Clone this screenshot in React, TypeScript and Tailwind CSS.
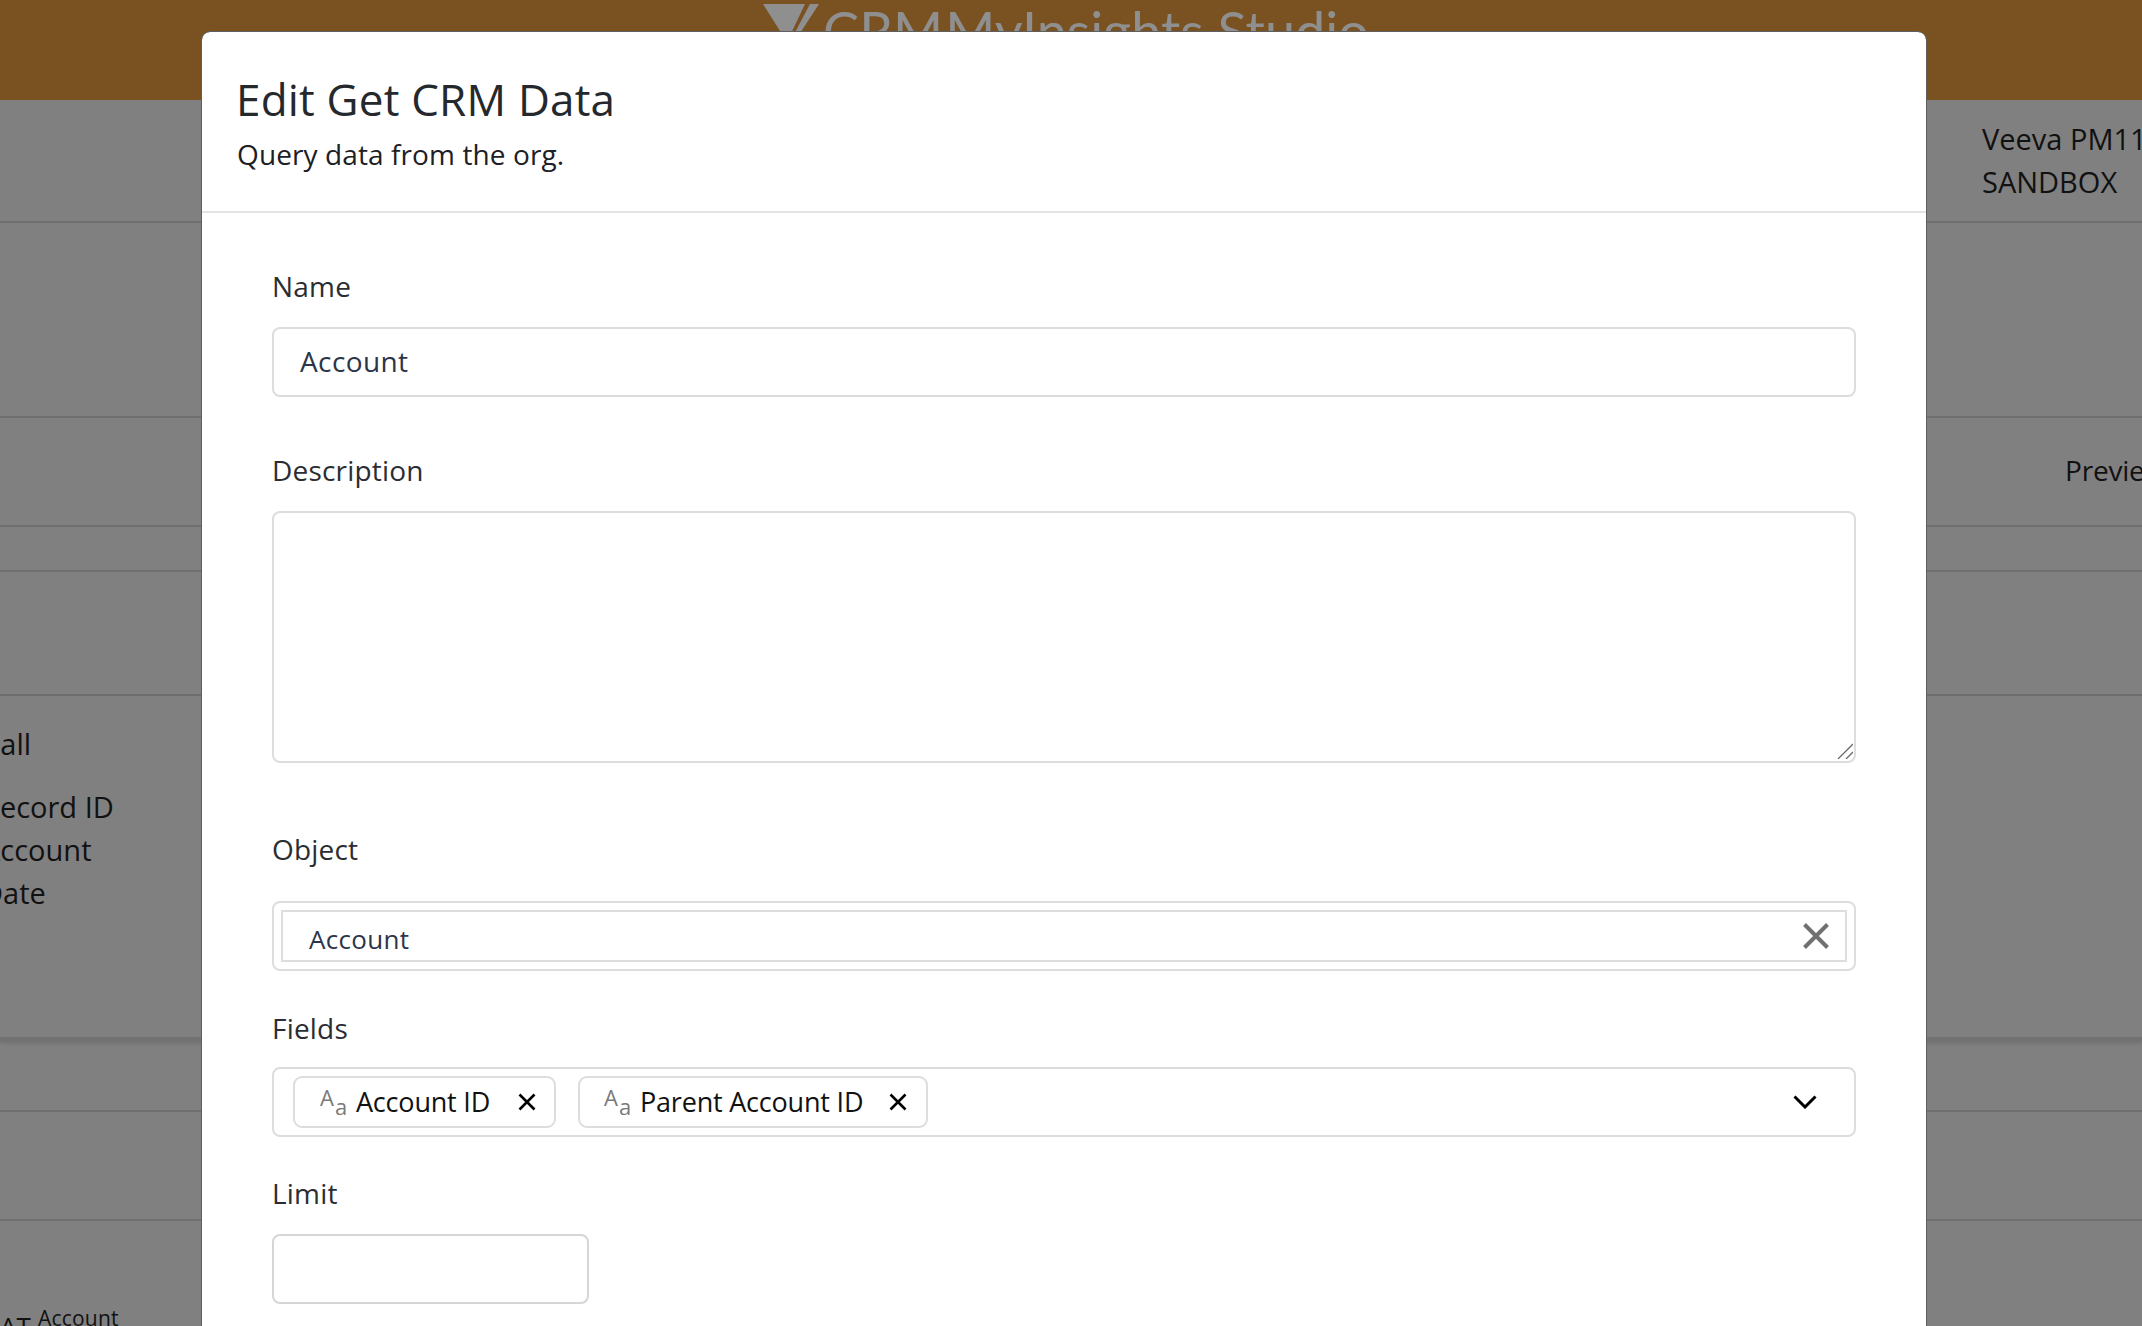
import React from "react";

const font = { fontFamily: '"Open Sans", "Noto Sans", sans-serif' };

function Aa() {
  return (
    <span className="relative inline-block w-[28px] h-[36px] text-[#7a7a7a] font-medium shrink-0">
      <span className="absolute left-0 top-[1px] text-[22px] leading-[24px]">A</span>
      <span className="absolute left-[15px] top-[10px] text-[22px] leading-[24px]">a</span>
    </span>
  );
}

function Chip({ label, className }: { label: string; className: string }) {
  return (
    <div className={`h-[52px] flex items-center border-2 border-[#dddddd] rounded-[9px] bg-white ${className}`}>
      <Aa />
      <span className="ml-[8px] text-[27px] text-[#111111] whitespace-nowrap tracking-[-0.2px]">{label}</span>
      <svg viewBox="0 0 20 20" className="w-[20px] h-[20px] ml-auto" fill="none" stroke="#000000" strokeWidth="2.6">
        <path d="M2.5 2.5 L17.5 17.5 M17.5 2.5 L2.5 17.5" />
      </svg>
    </div>
  );
}

function Label({ children, className }: { children: React.ReactNode; className: string }) {
  return <div className={`h-[40px] leading-[40px] text-[28px] text-[#2b2d31] tracking-[0.2px] ${className}`}>{children}</div>;
}

export default function App() {
  return (
    <div className="relative w-[2142px] h-[1326px] overflow-hidden bg-[#808080] text-[#111111]" style={font}>
      <header className="h-[100px] bg-[#7a5222] flex justify-center">
        <div className="flex items-start gap-[4px] -ml-[10px]">
          <svg viewBox="0 0 56 40" className="w-[56px] h-[40px] mt-[4px]">
            <path d="M0 0 H42 L24 38 Z M47 0 H56 L30 40 L28 36 Z" fill="#8f8f8f" />
          </svg>
          <span className="flex gap-[2px] text-[54px] leading-[62px] text-[#8f8f8f] whitespace-nowrap" style={{ fontFamily: "Lato, sans-serif" }}>
            <span>CRM</span>
            <span>MyInsights Studio</span>
          </span>
        </div>
      </header>

      <section className="h-[123px] border-b-2 border-[#6f6f6f] flex justify-end items-start pt-[17px]">
        <div className="w-[160px] text-[29px] leading-[43px] whitespace-nowrap">
          <div>Veeva PM11</div>
          <div>SANDBOX</div>
        </div>
      </section>
      <section className="h-[195px] border-b-2 border-[#6f6f6f]" />
      <section className="h-[109px] border-b-2 border-[#6f6f6f] flex justify-end items-center">
        <div className="w-[77px] overflow-hidden text-[28px] whitespace-nowrap pb-[4px] tracking-[-0.2px]">Preview</div>
      </section>
      <section className="h-[45px] border-b-2 border-[#6f6f6f]" />
      <section className="h-[124px] border-b-2 border-[#6f6f6f]" />
      <section className="h-[345px] border-b-4 border-[#727272] shadow-[0_2px_4px_rgba(0,0,0,0.15)] pt-[28px]">
        <div className="-ml-[18px] w-[180px] text-[29px]">
          <div className="h-[40px] leading-[40px] mb-[21px]">Call</div>
          <div className="h-[43px] leading-[43px]">Record ID</div>
          <div className="h-[43px] leading-[43px]">Account</div>
          <div className="h-[43px] leading-[43px]">Date</div>
        </div>
      </section>
      <section className="h-[71px] border-b-2 border-[#6f6f6f]" />
      <section className="h-[109px] border-b-2 border-[#6f6f6f]" />
      <section className="flex items-start pt-[85px]">
        <span className="text-[26px] leading-[26px] mt-[7px] w-[38px] overflow-hidden">AT</span>
        <span className="text-[21px] leading-[24px] text-[#111111] tracking-[0.2px]">Account</span>
      </section>

      <div className="absolute left-[202px] top-[32px] w-[1724px] h-[1400px] bg-white rounded-t-[8px] outline outline-1 outline-[#5f5f5f]">
        <div className="h-[181px] border-b-2 border-[#e3e3e3] pl-[34px] pt-[40px]">
          <h1 className="text-[44px] leading-[54px] text-[#25282c] font-normal tracking-[0.2px]">Edit Get CRM Data</h1>
          <p className="text-[28px] leading-[40px] mt-[8px] ml-[1px] text-[#1d2024] tracking-[0.1px]">Query data from the org.</p>
        </div>
        <div className="px-[70px] pt-[53px]">
          <Label className="mb-[21px]">Name</Label>
          <input
            readOnly
            value="Account"
            className="block w-full h-[70px] border-2 border-[#dddddd] rounded-[8px] px-[26px] pb-[3px] text-[28px] text-[#2d3548] outline-none tracking-[0.4px]"
          />
          <Label className="mt-[53px] mb-[21px]">Description</Label>
          <div className="relative">
            <textarea className="block w-full h-[252px] border-2 border-[#dddddd] rounded-[8px] outline-none resize-none" />
            <svg viewBox="0 0 16 16" className="absolute right-[3px] bottom-[4px] w-[16px] h-[16px]" fill="none" stroke="#666666" strokeWidth="1.3">
              <path d="M1 16 L16 1 M9 16 L16 9" />
            </svg>
          </div>
          <Label className="mt-[66px] mb-[32px]">Object</Label>
          <div className="h-[70px] border-2 border-[#dddddd] rounded-[8px] p-[7px]">
            <div className="h-[52px] border-2 border-[#dddddd] flex items-center pl-[26px] pr-[16px]">
              <span className="text-[26px] text-[#2d3548] mt-[6px] tracking-[0.3px]">Account</span>
              <svg viewBox="0 0 26 26" className="w-[26px] h-[26px] ml-auto" fill="none" stroke="#707070" strokeWidth="4">
                <path d="M1.5 1.5 L24.5 24.5 M24.5 1.5 L1.5 24.5" />
              </svg>
            </div>
          </div>
          <Label className="mt-[37px] mb-[19px]">Fields</Label>
          <div className="h-[70px] border-2 border-[#dddddd] rounded-[8px] flex items-center pl-[19px] pr-[37px]">
            <Chip label="Account ID" className="w-[263px] pl-[25px] pr-[17px]" />
            <Chip label="Parent Account ID" className="w-[350px] ml-[22px] pl-[24px] pr-[18px]" />
            <svg viewBox="0 0 24 14" className="w-[24px] h-[14px] ml-auto" fill="none" stroke="#000000" strokeWidth="3">
              <path d="M1.5 1.5 L12 12 L22.5 1.5" />
            </svg>
          </div>
          <Label className="mt-[36px] mb-[21px]">Limit</Label>
          <input readOnly className="block w-[317px] h-[70px] border-2 border-[#d6d6d6] rounded-[8px] outline-none" />
        </div>
      </div>
    </div>
  );
}
